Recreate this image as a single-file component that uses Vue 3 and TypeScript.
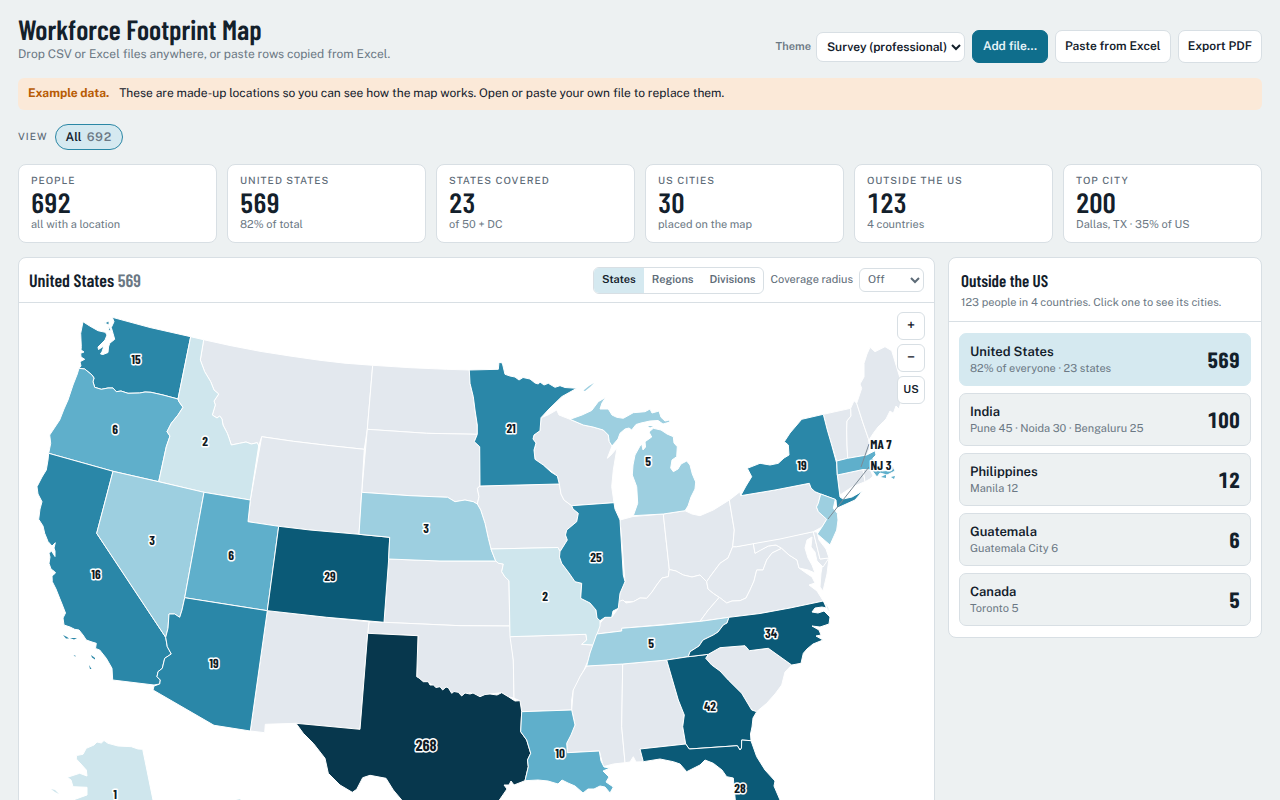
<script setup lang="ts">
import { ref } from 'vue'

interface Stat { label: string; value: string; note: string }
interface Country { name: string; detail: string; count: number }
interface StateShape { id: string; tone: string; d: string }
interface MapLabel { text: string; x: number; y: number; big?: boolean }

const theme = ref('Survey (professional)')
const radius = ref('Off')
const grouping = ref('States')
const groupings = ['States', 'Regions', 'Divisions']
const selected = ref('United States')

const stats: Stat[] = [
  { label: 'People', value: '692', note: 'all with a location' },
  { label: 'United States', value: '569', note: '82% of total' },
  { label: 'States covered', value: '23', note: 'of 50 + DC' },
  { label: 'US cities', value: '30', note: 'placed on the map' },
  { label: 'Outside the US', value: '123', note: '4 countries' },
  { label: 'Top city', value: '200', note: 'Dallas, TX · 35% of US' },
]

const countries: Country[] = [
  { name: 'United States', detail: '82% of everyone · 23 states', count: 569 },
  { name: 'India', detail: 'Pune 45 · Noida 30 · Bengaluru 25', count: 100 },
  { name: 'Philippines', detail: 'Manila 12', count: 12 },
  { name: 'Guatemala', detail: 'Guatemala City 6', count: 6 },
  { name: 'Canada', detail: 'Toronto 5', count: 5 },
]

// Shapes share one projected coordinate space; tone t0 is empty, t6 is the densest.
const shapes: StateShape[] = [
  { id: 'MT', tone: 't0', d: 'M203.7 339.7L230 345.5 260 351.3 290 356 320 360.3 345 363.2 372.7 365.3 367.3 429.3 364.3 449.3 326.7 445.3 293.3 441.3 261.7 436.7 258.7 446 257.3 442.7 251.3 444 246 442 239.7 443.3 231.3 445 229 438 227.3 433.3 223 425 222 419 219.7 416 217 418 212.3 415 215.3 405 214 401 218.7 394 214 390 210.7 381.7 204.7 371.7 200.3 360Z' },
  { id: 'ND', tone: 't0', d: 'M372.7 365.3L410 367.7 446.7 369.3 469.3 370 470 383.3 473.3 396.7 475 410 477.3 425 477.3 434.3 426.7 433.3 367.3 429.3Z' },
  { id: 'SD', tone: 't0', d: 'M367.3 429.3L426.7 433.3 477.3 434.3 474.3 441.7 479.7 446.7 480 486 477.3 488.3 479 496.7 477.3 504 473.3 501.7 465 500 455 501.7 447.7 497.3 410 495.7 361.7 492.3Z' },
  { id: 'WY', tone: 't0', d: 'M261.7 436.7L293.3 441.3 326.7 445.3 364.3 449.3 361.7 492.3 359 534.3 310 530 278.7 526.3 248 521.7 250.3 500Z' },
  { id: 'KS', tone: 't0', d: 'M388.7 559L440 561 495.7 561 498.7 563.3 503.3 564 501.7 571.7 505 577 509 580.7 509.7 626 460 625.7 384 622.3Z' },
  { id: 'OK', tone: 't0', d: 'M369 621.8L384 622.3 460 625.7 509.7 626 513.3 660 514 698.3 508.3 696.7 501.7 692.7 490 694 480 696.7 470 692.7 461.7 696 458.3 692.3 451.7 693.3 448.3 687.7 442.7 690 433.3 686.7 428.3 681.7 423.3 681.7 416.7 676.7 418 635.7 367.7 633.3Z' },
  { id: 'NM', tone: 't0', d: 'M267.3 610.7L326.7 617.3 369 621.8 367.7 633.3 360 729.3 296 723.3 265.3 724.3 264.7 732.7 250.3 731Z' },
  { id: 'IA', tone: 't0', d: 'M480 486L559.3 484 560 486.7 561 494 564 500 571.7 505.7 573 509 578.3 513.3 576.7 521.7 566.7 530 565.5 535 567.3 540 560 551.7 558 547.5 491 549 488.3 538.3 485 523.3 480.7 510 477.3 504 479 496.7 477.3 488.3Z' },
  { id: 'WI', tone: 't0', d: 'M541 417.7L548 415 556.7 410 559 415 570 419.3 583.3 425 593 427 603.3 430 608.3 435 609.3 441.7 612 446 607.3 458.3 611 455 617 448 613.3 470 611.7 486.7 614 502.7 571.7 505.7 564 500 561 494 559.3 484 557.3 476 543.3 465 535 459.3 534 450 536 443 533 439 534 435 540 430.7Z' },
  { id: 'IN', tone: 't0', d: 'M620 520L633 516.5 663.3 514 669.3 569.5 668.3 576.7 662 578 656.7 585 652 592 646.7 598.3 640 598 633.3 601.7 618.3 601.7 620 593.3 625 581.7 623.3 560Z' },
  { id: 'OH', tone: 't0', d: 'M663.3 514L685 510.7 692 514 700 515.7 713.3 510 729.3 500 734.3 530 732.7 546.7 728 558 720 563.3 715 570 710 576.7 706.7 581.7 700 575 692 577 683.3 575 676 571 669.3 569.5Z' },
  { id: 'KY', tone: 't0', d: 'M600 623.3L605 617.3 611.7 617.3 618.3 608.3 618.3 601.7 623 600 626 603 633.3 601.7 640 598 646.7 598.3 652 592 656.7 585 662 578 668.3 576.7 669.3 569.5 676 571 683.3 575 692 577 700 575 706.7 581.7 708 589 713.3 593.3 719.3 597.3 708.3 610 700 621.3 621.7 628.3 621.7 631 596.7 634Z' },
  { id: 'WV', tone: 't0', d: 'M732.7 546.7L736.7 546.7 753.3 543.3 755 553.3 760 550 768.3 546 776 545 781.7 548.3 772 553 766.7 560 763 570 756.7 570 754 581 750 590 746 598 740 600.7 732 601 726.7 603 719.3 597.3 713.3 593.3 708 589 706.7 581.7 710 576.7 715 570 720 563.3 728 558Z' },
  { id: 'VA', tone: 't0', d: 'M781.7 548.3L789 555 797 560 799 568 806 573 812 577 815 583 809 585 817 591 823.3 601 790 608 760 613.5 729 617.3 700 621.3 708.3 610 719.3 597.3 726.7 603 732 601 740 600.7 746 598 750 590 754 581 756.7 570 763 570 766.7 560 772 553ZM829 558L827 574 823 591 820 587 821 573 823 562Z' },
  { id: 'MD', tone: 't0', d: 'M753.3 543.3L813.3 531.7 820 559 829 558 823 567 817 561 815 552 811 547 812 537 807 540 805 548 808 558 812 565 815 573 808 570 799 568 797 560 789 555 781.7 548.3 776 545 768.3 546 755 553.3Z' },
  { id: 'DE', tone: 't0', d: 'M813.3 531.7L817 532 819 540 826 549 829 558 820 559Z' },
  { id: 'PA', tone: 't0', d: 'M729.3 500L740 491.7 740.7 495.7 775 490 809.3 483.3 811 488 815 491.7 820.7 494 818.3 503.3 816.5 507 818.3 511.7 826.7 519.3 822 527 813.3 531.7 780 539 736.7 546.7 732.7 546.7 734.3 530Z' },
  { id: 'AR', tone: 't0', d: 'M510 636.7L586 634.3 586.7 640 581.7 644.3 593.3 645 590 653 588.3 660 584 670 580 676.7 576 686 573.3 690 571.7 700 571.7 710 521.7 711.7 520 700.7 514 698.3 513.3 660Z' },
  { id: 'MS', tone: 't0', d: 'M586.7 666L622.7 664 621.7 726.7 625 762.7 613.3 764 603.3 766.7 599.3 751 567.3 752.7 566.7 743.3 575 725 571.7 710 573.3 690 580 676.7Z' },
  { id: 'AL', tone: 't0', d: 'M622.7 664L666.7 660 678.3 700 684.3 715 682.7 726.7 685.7 744 640 749 643.3 761.7 636 762 633.3 756.7 630 762 625 762.7 621.7 726.7Z' },
  { id: 'SC', tone: 't0', d: 'M708.3 654.3L720 647.7 745 645.7 749.3 650.7 768.3 648.3 791.7 665 785 672 781.7 685 775 694 766.7 703.3 756.7 711.7 751.7 710 741.7 693.3 728.3 680 720 671 711.7 665 705.7 658.3Z' },
  { id: 'VT', tone: 't0', d: 'M823.3 414.3L850.7 408.3 851 416 847 421 846.7 430 847 445 847.7 458.3 836.7 461 831.7 445 827.3 430Z' },
  { id: 'NH', tone: 't0', d: 'M850.7 408.3L854 400.7 856.7 403.3 863 423 868.3 438.3 870 448 866.7 455 847.7 458.3 847 445 846.7 430 847 421 851 416Z' },
  { id: 'ME', tone: 't0', d: 'M856.7 403.3L861.7 388.3 860 384 864 377 864 363.3 867 354 870 347.3 875 351.7 885 346.7 891.7 350.7 896 365 900 378 905 388 910 396 904 399 905 405 901 402 899 409 896 406 893.3 413.3 890 411 886 419 883.3 421.7 878 427 873.3 433.3 869 440 868.3 438.3 863 423Z' },
  { id: 'CT', tone: 't0', d: 'M837.3 475L863 469.5 865 481.7 852 487 840 495 838.5 485Z' },
  { id: 'RI', tone: 't0', d: 'M863 469.5L869.5 468 873 476 870 479 865 481.7Z' },
  { id: 'WA', tone: 't4', d: 'M112.3 317.3L150 327.5 190.7 336.7 178 399 163 395 151 392.3 145 392 139.7 393 128 393.3 121 391 116.3 391.7 113 388 108 388 101.3 389.3 94.7 387.3 93 381.7 94 378 92 375 88 371.7 84.7 369 79 368.3 81 366 80 361.7 84.7 359.3 81 357 80.7 353.3 84 352 81 350 81.3 346.7 80.7 333.3 83 321.7 89.7 326 98 330.7 105.3 332.3 107 335 105 340 98 347 98.5 349.5 104 346 102 351.5 100.5 354 103 354.5 108 352.5 108.5 347 109.7 343.3 114.7 339.3 113 333.3 111.3 327.5 114 321.7ZM104.5 323L109 321 109 325ZM108 326L111 330 109 331Z' },
  { id: 'OR', tone: 't3', d: 'M79 368.3L84.7 369 88 371.7 92 375 94 378 93 381.7 94.7 387.3 101.3 389.3 108 388 113 388 116.3 391.7 121 391 128 393.3 139.7 393 145 392 151 392.3 163 395 178 399 179 401.7 183 407.3 178 415 171.3 423.3 167 431.7 170 436 166.3 446.7 158.7 481.7 113 471.3 48.7 453.3 50.7 443.3 49.7 435 59.7 420 64 409 68 400 73 385 77.3 374Z' },
  { id: 'ID', tone: 't1', d: 'M190.7 336.7L203.7 339.7 200.3 360 204.7 371.7 210.7 381.7 214 390 218.7 394 214 401 215.3 405 212.3 415 217 418 219.7 416 222 419 223 425 227.3 433.3 229 438 231.3 445 239.7 443.3 246 442 251.3 444 257.3 442.7 258.7 446 250.3 500 204 492.3 158.7 481.7 166.3 446.7 170 436 167 431.7 171.3 423.3 178 415 183 407.3 179 401.7 178 399Z' },
  { id: 'CA', tone: 't4', d: 'M48.7 453.3L113 471.3 96.7 533.3 165.7 637.3 167.3 646.7 171.3 654 164.7 658.3 162.3 668.3 158 671.7 157 676.7 160.3 680 159.7 684 154 685 112.7 680 112 668.3 106.3 658.3 99.7 650 95.5 648.5 96.3 643.3 92 642 86.3 640 83 635 79 630 74.7 629.3 70 627 64 625 63 618 65.5 613 62 604 59.7 598.3 56 589 52.3 581.7 52 576 55.5 573 54.7 571.7 51 569 49 563.3 50 557 49 553.3 51.5 551 55 556.5 55 551 54 548 55.3 542.7 52 546 48 541.5 44.7 533.3 43 526 38.7 519.3 40 509 42 501.7 38 494 37 486.7 42 477 46.3 470 48 460Z' },
  { id: 'NV', tone: 't2', d: 'M113 471.3L158.7 481.7 204 492.3 184.7 597.7 182 610 179.7 617.3 174.7 614 169 614 168 628.3 165.7 637.3 96.7 533.3Z' },
  { id: 'UT', tone: 't3', d: 'M204 492.3L250.3 500 248 521.7 278.7 526.3 267.3 610.7 184.7 597.7Z' },
  { id: 'AZ', tone: 't4', d: 'M184.7 597.7L267.3 610.7 250.3 731 214 725.3 153 690 154 686 159.7 684 160.3 680 157 676.7 158 671.7 162.3 668.3 164.7 658.3 171.3 654 167.3 646.7 165.7 637.3 168 628.3 169 614 174.7 614 179.7 617.3 182 610Z' },
  { id: 'CO', tone: 't5', d: 'M278.7 526.3L310 530 359 534.3 389.7 537.3 388.7 559 384 622.3 326.7 617.3 267.3 610.7Z' },
  { id: 'NE', tone: 't2', d: 'M361.7 492.3L410 495.7 447.7 497.3 455 501.7 465 500 473.3 501.7 477.3 504 480.7 510 485 523.3 488.3 538.3 491 549 495.7 561 440 561 388.7 559 389.7 537.3 359 534.3Z' },
  { id: 'MN', tone: 't4', d: 'M469.3 370L498.3 369.3 499 362.3 502.3 363 505 374.3 510 376 515 377 519 380 523 377.5 530 379 535 383 538.3 384 540 382 544 385 548.3 383.3 555 387.3 560 385.7 565 387.5 576.7 388.3 561.7 396.7 549 409 541 417.7 540 430.7 534 435 533 439 536 443 534 450 535 459.3 543.3 465 551 472 557.3 476 559.3 484 480 486 479.7 446.7 474.3 441.7 477.3 434.3 477.3 425 475 410 473.3 396.7 470 383.3Z' },
  { id: 'MO', tone: 't1', d: 'M491 549L558 547.5 560 551.7 559.5 557 561.7 563.3 569 573 575 581.7 581.7 583.3 580.7 598.3 590 603 596 610 597 618 600 620.7 600 626 596.7 635 593.3 645 581.7 644.3 586.7 640 586 634.3 510 636.7 509 580.7 505 577 501.7 571.7 503.3 564 498.7 563.3 495.7 561Z' },
  { id: 'IL', tone: 't4', d: 'M571.7 505.7L614 502.7 615 509 620 520 623.3 575 625 581.7 620 593.3 618.3 608.3 613 611 611.7 617.3 605 617.3 600 620.7 597 618 596 610 590 603 580.7 598.3 581.7 583.3 575 581.7 569 573 561.7 563.3 559.5 557 560 551.7 567.3 540 565.5 535 566.7 530 576.7 521.7 578.3 513.3 573 509Z' },
  { id: 'MI', tone: 't2', d: 'M570 419.3L582 415 591.7 410.5 598.3 401.7 605.7 397.3 602 403 600 409 608.3 409 612 415 616.7 417.3 623.3 418.3 633.3 412.7 645 411.7 650 409 652 413 659 411 661 417.3 665 421 669 420 670 422 663 424 658 420.5 650 421 641 423 636 424.5 631.7 430 629 428 625 429 620 433.3 618 439 612 446 609.3 441.7 608.3 435 603.3 430 593 427 583.3 425ZM653.3 428.3L661 430 667 434 673.3 436.7 674 443 677.3 446.7 676.7 456.7 672 460 670.7 468 673.3 471.7 678 469 681 464 686.7 461 690 465 692.3 474 695.7 482 695 489 691 497 688 506 685 510.7 663.3 514 633.3 515.7 637.7 503.3 636.7 486.7 632.3 475 633 465 635 455 640 446 641.7 444 643 450 645.5 447 645 441.7 651.7 437 649 432Z' },
  { id: 'TX', tone: 't6', d: 'M367.7 633.3L418 635.7 416.7 676.7 419 678 423.3 681.7 428.3 681.7 430 685 433.3 685 436 687.5 440 686.7 442.7 690 446 687 448.3 687.7 451.7 693.3 454 691.5 458.3 692.3 461.7 696 465 693 470 694 473 693 480 696.7 485 694.5 490 694 497 695 501.7 692.7 508.3 696.7 515 701 520 700.7 521.7 711.7 520.7 731.7 526.7 740 530.7 753.3 527.5 760 528.3 766.7 525 780.7 514 785 511 781 509 785 504 785 507 789 498 802 482 814 468 832 466 858 440 850 428 830 414 815 401.7 800 393.3 790 386 778.3 370 775.3 362.7 777.7 356.7 789.3 352.3 792.3 340 785 328.3 773.3 325 758.3 313.3 743.3 303.3 733.3 296 723.3 360 729.3Z' },
  { id: 'LA', tone: 't3', d: 'M521.7 711.7L571.7 710 575 725 571 735 566.7 743.3 567.3 752.7 599.3 751 601 761 604 767 610 768 603 771 609 777 606 782 613.3 787 610 793 605 787 600 786 594 789 588 789 583 793 575 786 568 783 562 780 558 784 548 781 538 780 525 780.7 528.3 766.7 527.5 760 530.7 753.3 526.7 740 520.7 731.7Z' },
  { id: 'TN', tone: 't2', d: 'M596.7 634L621.7 631 621.7 628.3 663 625 703.3 621 729 617.3 727 623 723.3 625 718 632 713.3 635 703 640 699 646 690 651.7 688.3 656.7 666.7 660 622.7 664 586.7 666 590 653Z' },
  { id: 'GA', tone: 't5', d: 'M666.7 660L688.3 656.7 708.3 654.3 705.7 658.3 711.7 665 720 671 728.3 680 741.7 693.3 751.7 710 756.7 711.7 753 718 752 727 750.5 734 751 740.7 741.7 740 741.5 748 740 750 737.3 745.7 689.3 749 685.7 744 682.7 726.7 684.3 715 678.3 700Z' },
  { id: 'FL', tone: 't5', d: 'M640 749L685.7 744 689.3 749 737.3 745.7 740 750 741.5 748 741.7 740 751 740.7 756.7 756.7 765 770 775 781 774 786 780 800 797 825 806 850 800 870 780 860 758 835 736 808 735 797 733.3 778 726.7 776.7 722 770 713.3 763.3 705 760 700 765 692 769 686.7 771.7 680 764 673.3 761.7 660 759 643.3 761.7Z' },
  { id: 'NC', tone: 't5', d: 'M729 617.3L760 613.5 790 608 823.3 601 826.5 608 822 607 815 608 812 612 818 613 824 611 830 617 829 624 820 627 812 626 819 630 821 635 816 636 823 640 813 644 807 649 803.3 653.3 801 663.3 791.7 665 768.3 648.3 749.3 650.7 745 645.7 720 647.7 708.3 654.3 688.3 656.7 690 651.7 699 646 703 640 713.3 635 718 632 723.3 625 727 623ZM825 602L830 612 827 608Z' },
  { id: 'NY', tone: 't4', d: 'M740.7 495.7L746 486 751.7 476.7 747.3 468.3 760 463.3 770 465 778.3 463.3 784 458 789 455 788.3 445 784.3 441.7 790 433 801.7 419.3 823.3 414.3 827.3 430 831.7 445 836.7 463.3 837.3 475 838.5 485 840 497 843 499 852 497 862.7 491 855 500 836.7 508.3 836 500 820.7 494 815 491.7 811 488 809.3 483.3 775 490Z' },
  { id: 'NJ', tone: 't2', d: 'M820.7 494L835.3 499.3 833.3 508.3 837.3 513.3 838 520 836.7 530 830 545 825 540.7 817.3 534 822 527 826.7 519.3 818.3 511.7 816.5 507 818.3 503.3Z' },
  { id: 'MA', tone: 't3', d: 'M836.7 461L847.7 458.3 866.7 455 875 450.7 876 455 872.7 458.3 876 465 882 471 892 470 892 465 895 471 887 475 880 473 877 477 871.7 470 863 469.5 837.3 475Z' },
  { id: 'AK', tone: 't1', d: 'M86.3 748.3L94 745 97 742 101.3 743 104 740.5 108 743.3 118 746 131.3 746.7 138 749 142.7 749.3 153 800 160 822 140 822 70 820 73 800 87 795 87 787.3 73 786.7 71 780 67.3 777.3 79.7 773.3 87 776 86.3 770 80 763 76.3 759 76.5 755.5 83 754.3Z' },
]

// Small islands are drawn without an outline, which would hide them.
const islands: StateShape[] = [
  { id: 'CA', tone: 't4', d: 'M63 635L67 637 69 638.5 66 638.5ZM70 638L77 638 74 639.5ZM91 655L95 658 95 659.5 92 657.5ZM89 665L91.5 669 90 669ZM73.5 655L76 656 75 656.5Z' },
  { id: 'MI', tone: 't2', d: 'M583.5 390.5L589 386 594 383 590 387 585 391ZM648 426L653 426 650 427.5Z' },
  { id: 'MA', tone: 't3', d: 'M881 477L886 474.5 886 478ZM891 477L895 476 894 479Z' },
  { id: 'AK', tone: 't1', d: 'M51 789L55 790 59 794 55 792ZM236 800L240 799 242 802Z' },
]

const labels: MapLabel[] = [
  { text: '15', x: 136, y: 364 },
  { text: '6', x: 115, y: 434 },
  { text: '2', x: 205, y: 446 },
  { text: '3', x: 152, y: 545 },
  { text: '6', x: 231, y: 560 },
  { text: '16', x: 96, y: 579 },
  { text: '19', x: 214, y: 668 },
  { text: '29', x: 330, y: 581 },
  { text: '3', x: 426, y: 533 },
  { text: '21', x: 511, y: 433 },
  { text: '5', x: 648, y: 466 },
  { text: '25', x: 596, y: 562 },
  { text: '2', x: 545, y: 601 },
  { text: '5', x: 651, y: 648 },
  { text: '34', x: 771, y: 638 },
  { text: '42', x: 710, y: 711 },
  { text: '28', x: 740, y: 793 },
  { text: '10', x: 560, y: 758 },
  { text: '19', x: 802, y: 470 },
  { text: '1', x: 115, y: 799 },
  { text: 'MA 7', x: 881, y: 449 },
  { text: 'NJ 3', x: 881, y: 470 },
  { text: '268', x: 426, y: 751, big: true },
]
</script>

<template>
  <div class="page">
    <header class="top">
      <div>
        <h1>Workforce Footprint Map</h1>
        <p class="sub">Drop CSV or Excel files anywhere, or paste rows copied from Excel.</p>
      </div>
      <div class="actions">
        <div class="theme">
          <label for="theme">Theme</label>
          <select id="theme" v-model="theme">
            <option>Survey (professional)</option>
          </select>
        </div>
        <button class="btn primary" type="button">Add file…</button>
        <button class="btn" type="button">Paste from Excel</button>
        <button class="btn" type="button">Export PDF</button>
      </div>
    </header>

    <div class="banner">
      <strong>Example data.</strong>
      <span>These are made-up locations so you can see how the map works. Open or paste your own file to replace them.</span>
    </div>

    <div class="view-row">
      <span class="caps">View</span>
      <button class="pill" type="button">All <span>692</span></button>
    </div>

    <section class="stats">
      <article v-for="s in stats" :key="s.label" class="stat">
        <h2 class="caps">{{ s.label }}</h2>
        <div class="num">{{ s.value }}</div>
        <p>{{ s.note }}</p>
      </article>
    </section>

    <main class="columns">
      <section class="panel">
        <div class="map-head">
          <h2 class="title">United States <span>569</span></h2>
          <div class="map-tools">
            <div class="segmented">
              <button v-for="g in groupings" :key="g" type="button" :class="{ on: g === grouping }" @click="grouping = g">{{ g }}</button>
            </div>
            <label for="radius">Coverage radius</label>
            <select id="radius" v-model="radius" class="radius-select">
              <option>Off</option>
            </select>
          </div>
        </div>
        <div class="map-area">
          <svg viewBox="19 303 915 580" class="map" role="img" aria-label="People per state">
            <path v-for="s in shapes" :key="s.id" :d="s.d" :class="['state', s.tone]" />
            <path v-for="s in islands" :key="s.id" :d="s.d" :class="s.tone" />
            <path class="leader" d="M869 444L861 467M869 467L828 519" />
            <text v-for="(l, i) in labels" :key="i" :x="l.x" :y="l.y" :class="['label', { big: l.big }]">{{ l.text }}</text>
          </svg>
          <div class="zoom">
            <button class="sign" type="button" aria-label="Zoom in">+</button>
            <button class="sign" type="button" aria-label="Zoom out">−</button>
            <button type="button">US</button>
          </div>
        </div>
      </section>

      <aside class="panel">
        <div class="side-head">
          <h2>Outside the US</h2>
          <p>123 people in 4 countries. Click one to see its cities.</p>
        </div>
        <div class="country-list">
          <button
            v-for="c in countries"
            :key="c.name"
            type="button"
            :class="['country', { on: c.name === selected }]"
            @click="selected = c.name"
          >
            <span class="who">
              <span class="name">{{ c.name }}</span>
              <span class="detail">{{ c.detail }}</span>
            </span>
            <span class="count">{{ c.count }}</span>
          </button>
        </div>
      </aside>
    </main>
  </div>
</template>

<style>
body {
  margin: 0;
  background: #edf1f2;
}
</style>

<style scoped>
.page {
  --ink: #13202b;
  --muted: #6b7884;
  --line: #d8dfe4;
  --narrow: "Barlow Condensed", "Roboto Condensed", "Roboto", sans-serif;
  box-sizing: border-box;
  padding: 16px 18px 18px;
  color: var(--ink);
  font: 12px/16px "Public Sans", "Inter", sans-serif;
  text-rendering: geometricPrecision;
}
.page * {
  box-sizing: border-box;
}
h1, h2, p {
  margin: 0;
}
button, select {
  font: inherit;
  color: inherit;
  margin: 0;
  text-rendering: inherit;
}
button {
  cursor: pointer;
}
.top {
  display: flex;
  justify-content: space-between;
  align-items: flex-end;
  gap: 16px;
}
h1 {
  margin-bottom: 4px;
  font: 600 28px/26px var(--narrow);
}
.sub {
  color: var(--muted);
  line-height: 17px;
}
.actions {
  display: flex;
  align-items: center;
  gap: 7px;
}
.theme {
  display: flex;
  align-items: center;
  gap: 5px;
}
.theme label {
  color: var(--muted);
  font-weight: 600;
  font-size: 11px;
}
.theme select {
  height: 30px;
  padding: 0 0 0 6px;
  border: 1px solid var(--line);
  border-radius: 7px;
  background: #fff;
  font-weight: 600;
}
.btn {
  height: 33px;
  padding: 0 9px 2px;
  border: 1px solid var(--line);
  border-radius: 7px;
  background: #fff;
  font-weight: 600;
  white-space: nowrap;
}
.primary {
  padding: 0 10px 2px;
  background: #0f6e8c;
  border-color: #0f6e8c;
  color: #e8f5f9;
}
.banner {
  display: flex;
  gap: 10px;
  margin-top: 15px;
  padding: 7px 10px 9px;
  border-radius: 6px;
  background: #fbe9d8;
}
.banner strong {
  color: #b85c05;
}
.view-row {
  display: flex;
  align-items: center;
  gap: 7px;
  margin-top: 14px;
}
.caps {
  text-transform: uppercase;
  letter-spacing: 1px;
  font-size: 10px;
  line-height: 14px;
  font-weight: 500;
  color: #5d6b77;
}
.pill {
  height: 26px;
  padding: 0 10px;
  border: 1px solid #2b87a5;
  border-radius: 13px;
  background: #d5e9f0;
  font-weight: 600;
}
.pill span {
  margin-left: 2px;
  color: var(--muted);
  font-variant-numeric: tabular-nums;
}
.stats {
  display: grid;
  grid-template-columns: repeat(6, 1fr);
  gap: 10px;
  margin-top: 14px;
}
.stat {
  height: 79px;
  padding: 9px 12px;
  border: 1px solid var(--line);
  border-radius: 8px;
  background: #fff;
}
.num {
  font: 600 28px/28px var(--narrow);
  font-variant-numeric: tabular-nums;
}
.stat p {
  margin-top: 2px;
  color: var(--muted);
  font-size: 11px;
  line-height: 14px;
}
.columns {
  display: grid;
  grid-template-columns: minmax(0, 1fr) 314px;
  align-items: start;
  gap: 13px;
  margin-top: 14px;
}
.panel {
  border: 1px solid var(--line);
  border-radius: 8px;
  background: #fff;
  overflow: hidden;
}
.map-head {
  display: flex;
  align-items: center;
  justify-content: space-between;
  height: 45px;
  padding: 0 10px;
  border-bottom: 1px solid var(--line);
}
.title {
  font: 600 18px/22px var(--narrow);
}
.title span {
  color: var(--muted);
}
.map-tools {
  display: flex;
  align-items: center;
  gap: 6px;
  color: #5d6b77;
  font-size: 11px;
}
.segmented {
  display: flex;
  height: 27px;
  border: 1px solid var(--line);
  border-radius: 6px;
  overflow: hidden;
}
.segmented button {
  padding: 0 8px;
  border: 0;
  background: none;
  font-weight: 600;
}
.segmented .on {
  background: #d5e9f0;
  color: var(--ink);
}
.radius-select {
  width: 65px;
  height: 24px;
  padding: 0 4px;
  border: 1px solid var(--line);
  border-radius: 6px;
  background: #fff;
}
.map-area {
  position: relative;
}
.map {
  display: block;
  width: 100%;
}
.state {
  stroke: #fff;
  stroke-width: 1;
  stroke-linejoin: round;
}
.t0 { fill: #e3e8ee; }
.t1 { fill: #cfe6ed; }
.t2 { fill: #9dcfe0; }
.t3 { fill: #5fafcb; }
.t4 { fill: #2a87a8; }
.t5 { fill: #0b5a77; }
.t6 { fill: #07374d; }
.leader {
  fill: none;
  stroke: #7d8a94;
  stroke-width: 1;
}
.label {
  font: 700 13px var(--narrow);
  fill: #101b25;
  stroke: #fff;
  stroke-width: 3;
  stroke-linejoin: round;
  paint-order: stroke;
  text-anchor: middle;
}
.big {
  font-size: 16px;
}
.zoom {
  position: absolute;
  top: 9px;
  right: 9px;
  display: grid;
  gap: 4px;
}
.zoom button {
  width: 28px;
  height: 28px;
  padding: 0;
  border: 1px solid var(--line);
  border-radius: 6px;
  background: #fff;
  font-weight: 600;
  font-size: 11px;
}
.zoom .sign {
  font-size: 14px;
}
.side-head {
  padding: 12px 12px 10px;
  border-bottom: 1px solid var(--line);
}
.side-head h2 {
  font: 600 17px/22px var(--narrow);
}
.side-head p {
  margin-top: 3px;
  color: var(--muted);
  font-size: 11px;
}
.country-list {
  display: grid;
  gap: 7px;
  padding: 11px 10px;
}
.country {
  display: flex;
  align-items: center;
  justify-content: space-between;
  height: 53px;
  padding: 0 10px;
  border: 1px solid var(--line);
  border-radius: 7px;
  background: #edf1f2;
  text-align: left;
}
.country.on {
  background: #d5e9f0;
  border-color: #d5e9f0;
}
.who {
  display: grid;
}
.name {
  font-weight: 600;
  font-size: 13px;
  line-height: 19px;
}
.detail {
  color: var(--muted);
  font-size: 11px;
}
.count {
  font: 700 22px/26px var(--narrow);
  font-variant-numeric: tabular-nums;
}
</style>
